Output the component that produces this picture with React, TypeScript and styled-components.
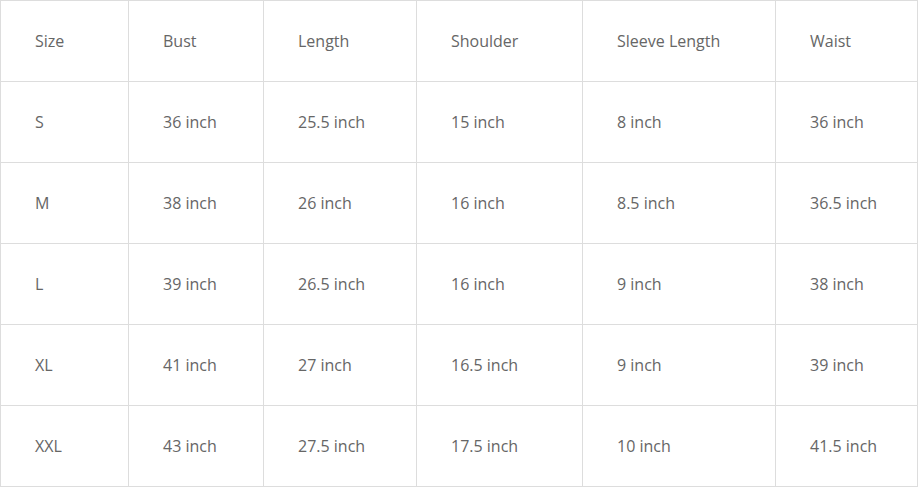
import styled, { createGlobalStyle } from 'styled-components'

const GlobalStyle = createGlobalStyle`
  html, body {
    margin: 0;
    padding: 0;
    background: #fff;
  }
`;

const columns = ['128px', '135px', '153px', '166px', '193px', '142px'];

const headers = ['Size', 'Bust', 'Length', 'Shoulder', 'Sleeve Length', 'Waist'];

const rows = [
  ['S', '36 inch', '25.5 inch', '15 inch', '8 inch', '36 inch'],
  ['M', '38 inch', '26 inch', '16 inch', '8.5 inch', '36.5 inch'],
  ['L', '39 inch', '26.5 inch', '16 inch', '9 inch', '38 inch'],
  ['XL', '41 inch', '27 inch', '16.5 inch', '9 inch', '39 inch'],
  ['XXL', '43 inch', '27.5 inch', '17.5 inch', '10 inch', '41.5 inch'],
];

const Table = styled.div`
  display: grid;
  grid-template-columns: ${columns.join(' ')};
  grid-auto-rows: 81px;
  width: max-content;
  border-left: 1px solid #dddddd;
  border-top: 1px solid #dddddd;
  font-family: 'Open Sans', 'Noto Sans', sans-serif;
  font-size: 16px;
  color: #666666;
`;

const Cell = styled.div`
  display: flex;
  align-items: center;
  padding: 0 0 1px 34px;
  border-right: 1px solid #dddddd;
  border-bottom: 1px solid #dddddd;
  white-space: nowrap;
`;

export default function App() {
  return (
    <>
      <GlobalStyle />
      <Table>
        {headers.map((h) => (
          <Cell key={h}>{h}</Cell>
        ))}
        {rows.map((row) =>
          row.map((value, i) => <Cell key={row[0] + i}>{value}</Cell>)
        )}
      </Table>
    </>
  )
}
